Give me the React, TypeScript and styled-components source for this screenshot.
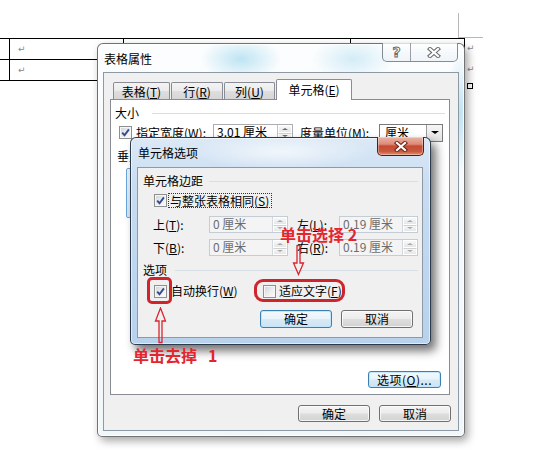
import React from 'react'
import styled, { createGlobalStyle } from 'styled-components'

const GlobalStyle = createGlobalStyle`
  *, *::before, *::after { box-sizing: border-box; }
  html, body { margin: 0; padding: 0; background: #fff; }
  body {
    font-family: "Noto Sans CJK SC", "Noto Sans", sans-serif;
    font-size: 12px;
    color: #000;
  }
  u { text-decoration-thickness: 1px; text-underline-offset: 1px; }
`;

const Page = styled.div`
  position: relative;
  width: 544px;
  height: 467px;
  overflow: hidden;
  background: #fff;
`;

/* ---- the word document behind the dialogs ---- */

const CropMark = styled.div`
  position: absolute;
  left: 458px;
  top: 13px;
  width: 25px;
  height: 25px;
  border-left: 1px solid #b8b8b8;
  border-bottom: 1px solid #b8b8b8;
`;

const Doc = styled.div`
  display: flex;
  align-items: flex-start;
  padding-top: 38px;
`;

const Table = styled.div`
  display: grid;
  grid-template-columns: 10px 114px 227px 114px;
  grid-auto-rows: 21px;
  border-top: 1px solid #000;
`;

const Cell = styled.div`
  border-right: 1px solid #000;
  border-bottom: 1px solid #000;
  padding: 6px 0 0 8px;
  font-family: "DejaVu Sans", sans-serif;
  font-size: 9px;
  line-height: 9px;
  color: #8a8a8a;
`;

const RowEnds = styled.div`
  display: flex;
  flex-direction: column;
  margin-left: 2px;
`;

const RowEnd = styled.div`
  height: 21px;
  padding-top: 6px;
  font-family: "DejaVu Sans", sans-serif;
  font-size: 9px;
  line-height: 9px;
  color: #8a8a8a;
`;

const TableEnd = styled.div`
  width: 6px;
  height: 6px;
  margin-top: 3px;
  border: 1px solid #000;
`;

/* ---- windows ---- */

const Window = styled.div<{ $x: number; $y: number; $w: number; $h: number; $active?: boolean }>`
  position: absolute;
  left: ${p => p.$x}px;
  top: ${p => p.$y}px;
  width: ${p => p.$w}px;
  height: ${p => p.$h}px;
  display: flex;
  flex-direction: column;
  border-radius: 6px 6px 5px 5px;
  z-index: ${p => (p.$active ? 3 : 2)};
  border: 1px solid ${p => (p.$active ? 'rgba(28,40,58,0.9)' : 'rgba(80,80,80,0.8)')};
  background: ${p =>
    p.$active
      ? `radial-gradient(90px 18px at 150px 14px, rgba(255,255,255,0.65), transparent),
         linear-gradient(180deg, #dce9f6 0%, #c9ddf2 22%, #bed6ef 60%, #b9d2ec 100%)`
      : `radial-gradient(40px 22px at 143px 15px, rgba(170,220,240,0.75), transparent),
         radial-gradient(40px 22px at 255px 15px, rgba(185,225,242,0.6), transparent),
         radial-gradient(14px 60px at 362px 70px, rgba(175,220,240,0.8), transparent),
         linear-gradient(180deg, #fbfdfe 0%, #f1f6f9 100%)`};
  box-shadow: ${p =>
    p.$active
      ? 'inset 0 0 0 1px rgba(255,255,255,0.55), 5px 6px 10px rgba(0,0,0,0.55)'
      : 'inset 0 0 0 1px rgba(255,255,255,0.8), 3px 4px 9px rgba(0,0,0,0.35)'};
`;

const TitleBar = styled.div<{ $h: number; $pad: number }>`
  position: relative;
  flex: none;
  height: ${p => p.$h}px;
  padding-left: ${p => p.$pad}px;
  display: flex;
  align-items: center;
  font-size: 12px;
  color: #000;
`;

const CaptionButtons = styled.div`
  position: absolute;
  top: -1px;
  right: 6px;
  display: flex;
  height: 19px;
  border: 1px solid rgba(95,100,110,0.75);
  border-top: none;
  border-radius: 0 0 5px 5px;
  background: linear-gradient(180deg, rgba(255,255,255,0.75), rgba(232,240,246,0.7));
  overflow: hidden;
`;

const CaptionButton = styled.div<{ $w: number }>`
  width: ${p => p.$w}px;
  height: 100%;
  display: flex;
  align-items: center;
  justify-content: center;
  & + & { border-left: 1px solid rgba(95,100,110,0.6); }
`;

const HelpGlyph = styled.span`
  font-family: "DejaVu Sans", sans-serif;
  font-weight: 700;
  font-size: 14px;
  line-height: 14px;
  color: #fff;
  -webkit-text-stroke: 1px #6a6a6a;
`;

const CloseButton = styled.div`
  position: absolute;
  top: -1px;
  right: 6px;
  width: 47px;
  height: 19px;
  border: 1px solid #5b1810;
  border-top: none;
  border-radius: 0 0 5px 5px;
  background: linear-gradient(180deg, #eab4a6 0%, #dc8b78 40%, #c74a33 50%, #c85a3f 80%, #e0906b 100%);
  box-shadow: inset 0 0 0 1px rgba(255,255,255,0.35);
  display: flex;
  align-items: center;
  justify-content: center;
`;

const XGlyph = ({ fill, edge }: { fill: string; edge: string }) => (
  <svg width="14" height="11" viewBox="0 0 14 11">
    <path d="M3 2 L11 9 M11 2 L3 9" stroke={edge} strokeWidth="4.2" strokeLinecap="square" />
    <path d="M3 2 L11 9 M11 2 L3 9" stroke={fill} strokeWidth="2.2" strokeLinecap="square" />
  </svg>
);

const Client = styled.div<{ $margin: string; $pad: string }>`
  flex: 1;
  margin: ${p => p.$margin};
  padding: ${p => p.$pad};
  display: flex;
  flex-direction: column;
  background: #f0f0f0;
  border: 1px solid #8d99a5;
`;

/* ---- tabs ---- */

const TabStrip = styled.div`
  display: flex;
  align-items: flex-end;
  height: 20px;
  padding-left: 3px;
`;

const Tab = styled.div<{ $w: number; $active?: boolean }>`
  position: relative;
  z-index: ${p => (p.$active ? 1 : 0)};
  width: ${p => p.$w}px;
  height: ${p => (p.$active ? 21 : 17)}px;
  margin-bottom: ${p => (p.$active ? -1 : 0)}px;
  margin-right: ${p => (p.$active ? 0 : 1)}px;
  border: 1px solid #898c95;
  border-bottom: none;
  border-radius: 2px 2px 0 0;
  background: ${p => (p.$active ? '#fff' : 'linear-gradient(180deg, #f3f3f3 0%, #ebebeb 50%, #dedede 51%, #d6d6d6 100%)')};
  display: flex;
  align-items: center;
  justify-content: center;
  padding-top: ${p => (p.$active ? 0 : 1)}px;
  font-size: 12px;
  line-height: 12px;
`;

const TabPanel = styled.div`
  height: 296px;
  margin-right: 1px;
  display: flex;
  flex-direction: column;
  background: #fff;
  border: 1px solid #898c95;
`;

/* ---- generic dialog parts ---- */

const GroupHeader = styled.div<{ $mt: number; $ml: number; $mr: number; $gap: number }>`
  display: flex;
  align-items: center;
  height: 14px;
  margin: ${p => p.$mt}px ${p => p.$mr}px 0 ${p => p.$ml}px;
  gap: ${p => p.$gap}px;
  line-height: 14px;
`;

const Rule = styled.div`
  flex: 1;
  height: 1px;
  background: #d5dfe5;
`;

const Row = styled.div<{ $mt: number; $h: number; $pl: number }>`
  display: flex;
  align-items: center;
  height: ${p => p.$h}px;
  margin-top: ${p => p.$mt}px;
  padding-left: ${p => p.$pl}px;
  line-height: 14px;
  white-space: nowrap;
`;

const Label = styled.span<{ $w?: number; $ml?: number; $muted?: boolean }>`
  flex: none;
  width: ${p => (p.$w ? `${p.$w}px` : 'auto')};
  margin-left: ${p => p.$ml ?? 0}px;
  color: ${p => (p.$muted ? '#6d6d6d' : '#000')};
`;

const FocusLabel = styled.span`
  margin-left: 1px;
  padding: 0 2px 0 1px;
  border: 1px dotted #333;
  line-height: 13px;
`;

const Box = styled.span`
  flex: none;
  width: 13px;
  height: 13px;
  border: 1px solid #8e8f8f;
  background: linear-gradient(135deg, #cfd2d6 0%, #eceef0 55%, #fbfbfb 100%);
  box-shadow: inset 0 0 0 1px #f6f6f6;
  display: flex;
  align-items: center;
  justify-content: center;
`;

const CheckBox = ({ checked }: { checked?: boolean }) => (
  <Box>
    {checked && (
      <svg width="9" height="9" viewBox="0 0 9 9">
        <path d="M1.2 4.6 L3.5 7.2 L7.9 1.4" stroke="#34498f" strokeWidth="1.9" fill="none" />
      </svg>
    )}
  </Box>
);

const Spin = styled.div<{ $w: number; $off?: boolean }>`
  flex: none;
  width: ${p => p.$w}px;
  height: 100%;
  display: flex;
  border: 1px solid ${p => (p.$off ? '#c4ccd6' : '#abadb3')};
  background: ${p => (p.$off ? '#f4f4f4' : '#fff')};
`;

const SpinText = styled.span<{ $off?: boolean }>`
  flex: 1;
  padding-left: 3px;
  line-height: 14px;
  color: ${p => (p.$off ? '#6d6d6d' : '#000')};
`;

const SpinButtons = styled.div<{ $off?: boolean }>`
  flex: none;
  width: 15px;
  display: flex;
  flex-direction: column;
  border-left: 1px solid ${p => (p.$off ? '#d3d8de' : '#bfc3c9')};
`;

const SpinHalf = styled.div`
  flex: 1;
  display: flex;
  align-items: center;
  justify-content: center;
  background: linear-gradient(180deg, #f8f8f8, #e6e6e6);
  border: 1px solid #fff;
  & + & { border-top: 1px solid #d0d0d0; }
`;

const Tri = styled.span<{ $up?: boolean; $c: string; $s: number }>`
  width: 0;
  height: 0;
  border-left: ${p => p.$s}px solid transparent;
  border-right: ${p => p.$s}px solid transparent;
  ${p => (p.$up ? `border-bottom: ${p.$s - 1}px solid ${p.$c};` : `border-top: ${p.$s - 1}px solid ${p.$c};`)}
`;

const SpinBox = ({ w, value, off }: { w: number; value: string; off?: boolean }) => (
  <Spin $w={w} $off={off}>
    <SpinText $off={off}>{value}</SpinText>
    <SpinButtons $off={off}>
      <SpinHalf><Tri $up $c={off ? '#a8a8a8' : '#6a6a6a'} $s={3} /></SpinHalf>
      <SpinHalf><Tri $c={off ? '#a8a8a8' : '#6a6a6a'} $s={3} /></SpinHalf>
    </SpinButtons>
  </Spin>
);

const Combo = styled.div`
  flex: none;
  width: 64px;
  height: 18px;
  display: flex;
  border: 1px solid #7a7a7a;
  background: #fff;
`;

const ComboText = styled.span`
  flex: 1;
  padding-left: 5px;
  line-height: 15px;
`;

const ComboButton = styled.span`
  width: 16px;
  display: flex;
  align-items: center;
  justify-content: center;
  border-left: 1px solid #9a9a9a;
  background: linear-gradient(180deg, #f6f6f6, #e2e2e2);
`;

const AlignButton = styled.div`
  width: 40px;
  height: 50px;
  margin: 5px 0 0 15px;
  border: 1px solid #6aa6dc;
  border-radius: 2px;
  background: linear-gradient(180deg, #e9f4fd, #cfe6f9);
`;

const ButtonRow = styled.div<{ $mt: number; $pr: number }>`
  display: flex;
  justify-content: flex-end;
  gap: 9px;
  margin-top: ${p => p.$mt}px;
  padding-right: ${p => p.$pr}px;
`;

const PushButton = styled.div<{ $h: number; $w?: number; $blue?: boolean }>`
  flex: none;
  width: ${p => p.$w ?? 72}px;
  height: ${p => p.$h}px;
  border: 1px solid ${p => (p.$blue ? '#3c7fb1' : '#707070')};
  border-radius: 3px;
  background: ${p =>
    p.$blue
      ? 'linear-gradient(180deg, #f3f9fd 0%, #e8f3fa 48%, #d8eaf6 52%, #cde3f3 100%)'
      : 'linear-gradient(180deg, #f4f4f4 0%, #ececec 48%, #dedede 52%, #d2d2d2 100%)'};
  box-shadow: inset 0 0 0 1px ${p => (p.$blue ? 'rgba(190,230,253,0.9)' : 'rgba(255,255,255,0.75)')};
  display: flex;
  align-items: center;
  justify-content: center;
  line-height: 12px;
  font-size: 12px;
`;

const OptionsButton = styled(PushButton)`
  margin: auto 8px 6px 0;
  align-self: flex-end;
  letter-spacing: 0.5px;
`;

/* ---- red annotations ---- */

const Ring = styled.div<{ $x: number; $y: number; $w: number; $h: number; $r: number }>`
  position: absolute;
  z-index: 4;
  left: ${p => p.$x}px;
  top: ${p => p.$y}px;
  width: ${p => p.$w}px;
  height: ${p => p.$h}px;
  border: 3px solid #cf242c;
  border-radius: ${p => p.$r}px;
`;

const Note = styled.div<{ $x: number; $y: number }>`
  position: absolute;
  z-index: 4;
  left: ${p => p.$x}px;
  top: ${p => p.$y}px;
  font-family: "Noto Sans CJK SC", sans-serif;
  font-weight: 700;
  font-size: 16px;
  line-height: 16px;
  white-space: pre;
  color: #e3262e;
`;

const ArrowSvg = styled.svg<{ $x: number; $y: number }>`
  position: absolute;
  z-index: 4;
  left: ${p => p.$x}px;
  top: ${p => p.$y}px;
`;

export default function App() {
  return (
    <Page>
      <GlobalStyle />
      <CropMark />
      <Doc>
        <Table>
          <Cell />
          <Cell>↵</Cell>
          <Cell />
          <Cell />
          <Cell />
          <Cell>↵</Cell>
          <Cell />
          <Cell />
        </Table>
        <RowEnds>
          <RowEnd>↵</RowEnd>
          <RowEnd>↵</RowEnd>
          <TableEnd />
        </RowEnds>
      </Doc>

      {/* 表格属性 */}
      <Window $x={97} $y={43} $w={368} $h={394}>
        <TitleBar $h={28} $pad={6}>
          表格属性
          <CaptionButtons>
            <CaptionButton $w={27}><HelpGlyph>?</HelpGlyph></CaptionButton>
            <CaptionButton $w={47}><XGlyph fill="#fff" edge="#6a6a6a" /></CaptionButton>
          </CaptionButtons>
        </TitleBar>
        <Client $margin="0 5px 5px 5px" $pad="6px 7px 8px 6px">
          <TabStrip>
            <Tab $w={57}>表格(<u>T</u>)</Tab>
            <Tab $w={52}>行(<u>R</u>)</Tab>
            <Tab $w={51}>列(<u>U</u>)</Tab>
            <Tab $w={76} $active>单元格(<u>E</u>)</Tab>
          </TabStrip>
          <TabPanel>
            <GroupHeader $mt={6} $ml={4} $mr={4} $gap={13}>
              <span>大小</span>
              <Rule />
            </GroupHeader>
            <Row $mt={4} $h={17} $pl={8}>
              <CheckBox checked />
              <Label $w={77} $ml={4}>指定宽度(<u>W</u>):</Label>
              <SpinBox w={80} value="3.01 厘米" />
              <Label $w={79} $ml={7}>度量单位(<u>M</u>):</Label>
              <Combo>
                <ComboText>厘米</ComboText>
                <ComboButton><Tri $c="#000" $s={4} /></ComboButton>
              </Combo>
            </Row>
            <Row $mt={8} $h={14} $pl={6}>
              <Label>垂直对齐方式</Label>
            </Row>
            <AlignButton />
            <OptionsButton $h={17} $w={73} $blue>选项(<u>O</u>)...</OptionsButton>
          </TabPanel>
          <ButtonRow $mt={10} $pr={0}>
            <PushButton $h={17}>确定</PushButton>
            <PushButton $h={17}>取消</PushButton>
          </ButtonRow>
        </Client>
      </Window>

      {/* 单元格选项 */}
      <Window $x={130} $y={137} $w={301} $h={208} $active>
        <TitleBar $h={29} $pad={7}>
          单元格选项
          <CloseButton><XGlyph fill="#fff" edge="#6b2418" /></CloseButton>
        </TitleBar>
        <Client $margin="0 7px 6px 6px" $pad="0">
          <GroupHeader $mt={6} $ml={5} $mr={4} $gap={6}>
            <span>单元格边距</span>
            <Rule />
          </GroupHeader>
          <Row $mt={5} $h={15} $pl={16}>
            <CheckBox checked />
            <FocusLabel>与整张表格相同(<u>S</u>)</FocusLabel>
          </Row>
          <Row $mt={8} $h={17} $pl={15}>
            <Label $w={56}>上(<u>T</u>):</Label>
            <SpinBox w={79} value="0 厘米" off />
            <Label $w={42} $ml={9}>左(<u>L</u>):</Label>
            <SpinBox w={79} value="0.19 厘米" off />
          </Row>
          <Row $mt={6} $h={17} $pl={15}>
            <Label $w={56}>下(<u>B</u>):</Label>
            <SpinBox w={79} value="0 厘米" off />
            <Label $w={42} $ml={9}>右(<u>R</u>):</Label>
            <SpinBox w={79} value="0.19 厘米" off />
          </Row>
          <GroupHeader $mt={7} $ml={5} $mr={4} $gap={8}>
            <span>选项</span>
            <Rule />
          </GroupHeader>
          <Row $mt={7} $h={14} $pl={16}>
            <CheckBox checked />
            <Label $w={92} $ml={4}>自动换行(<u>W</u>)</Label>
            <CheckBox />
            <Label $ml={3}>适应文字(<u>F</u>)</Label>
          </Row>
          <ButtonRow $mt={12} $pr={9}>
            <PushButton $h={18} $blue>确定</PushButton>
            <PushButton $h={18}>取消</PushButton>
          </ButtonRow>
        </Client>
      </Window>

      {/* annotations */}
      <Ring $x={147} $y={277} $w={25} $h={27} $r={5} />
      <Ring $x={254} $y={279} $w={91} $h={23} $r={9} />
      <Note $x={280} $y={226}>单击选择 2</Note>
      <Note $x={133} $y={347}>单击去掉   1</Note>
      <ArrowSvg $x={154} $y={307} width="13" height="37" viewBox="0 0 13 37">
        <path d="M6.5 1 L11.5 14 L8 14 L8 35.5 L5 35.5 L5 14 L1.5 14 Z" fill="none" stroke="#d8262e" strokeWidth="1.3" />
      </ArrowSvg>
      <ArrowSvg $x={292} $y={245} width="13" height="31" viewBox="0 0 13 31">
        <path d="M5 0.5 L8 0.5 L8 18 L11.5 18 L6.5 29.5 L1.5 18 L5 18 Z" fill="none" stroke="#d8262e" strokeWidth="1.3" />
      </ArrowSvg>
    </Page>
  );
}
